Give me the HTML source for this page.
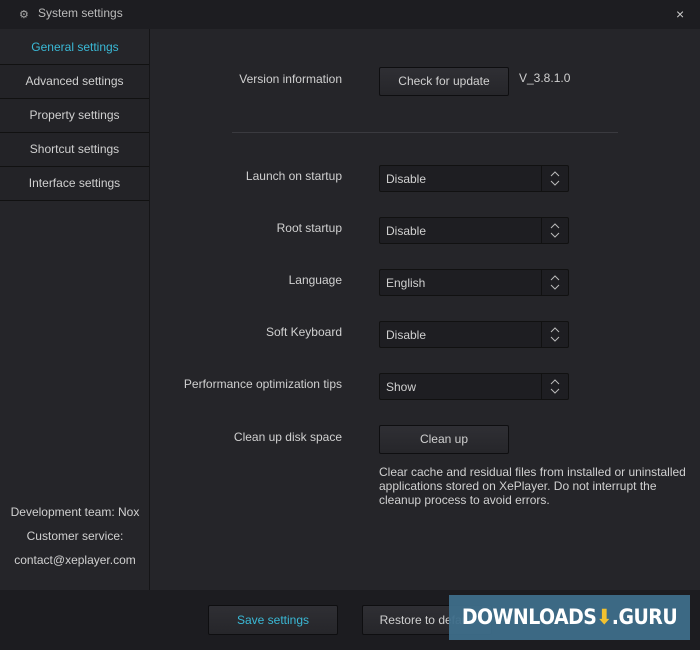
<!DOCTYPE html><html><head><style>
body{margin:0;width:700px;height:650px;background:#252529;font-family:"Liberation Sans",sans-serif;font-size:12px;color:#d0d0d0;position:relative;overflow:hidden}
.a{position:absolute}
.title{left:0;top:0;width:700px;height:29px;background:#1d1d21}
.side{left:0;top:29px;width:149px;height:561px;border-right:1px solid #151517;background:#252529}
.item{left:0;width:149px;height:33px;border-top:1px solid #111;line-height:33px;text-align:center;background:#232327}
.lbl{width:342px;text-align:right;left:0}
.sel{left:379px;width:190px;height:27px;border:1px solid #111;background:#1e1e22;line-height:26px;box-sizing:border-box;border-radius:2px}
.sel span{padding-left:6px}
.sel i{position:absolute;right:0;top:0;width:26px;height:25px;border-left:1px solid #111}
.btn{border:1px solid #0e0e10;background:linear-gradient(#2f2f34,#26262a);text-align:center;box-sizing:border-box;border-radius:2px}
</style></head><body>
<div class="a title"></div>
<div class="a" style="left:19px;top:8px;color:#aaa;font-size:11px">⚙</div>
<div class="a" style="left:38px;top:6px;color:#bbb">System settings</div>
<div class="a" style="left:676px;top:6px;color:#ccc;font-size:14px">×</div>
<div class="a side"></div>
<div class="a" style="left:0;top:40px;width:150px;text-align:center;color:#3ab9d6">General settings</div>
<div class="a item" style="top:64px">Advanced settings</div>
<div class="a item" style="top:98px">Property settings</div>
<div class="a item" style="top:132px">Shortcut settings</div>
<div class="a item" style="top:166px;border-bottom:1px solid #111">Interface settings</div>
<div class="a" style="left:0;top:500px;width:150px;text-align:center;line-height:24px">Development team: Nox<br>Customer service:<br>contact@xeplayer.com</div>
<div class="a lbl" style="top:72px">Version information</div>
<div class="a btn" style="left:379px;top:67px;width:130px;height:29px;line-height:27px">Check for update</div>
<div class="a" style="left:519px;top:71px">V_3.8.1.0</div>
<div class="a" style="left:232px;top:132px;width:386px;height:1px;background:#3a3a3f"></div>
<div class="a lbl" style="top:169px">Launch on startup</div>
<div class="a sel" style="top:165px"><span>Disable</span><i><svg width="26" height="25"><path d="M9 10l4-4 4 4M9 15l4 4 4-4" fill="none" stroke="#bbb"/></svg></i></div>
<div class="a lbl" style="top:221px">Root startup</div>
<div class="a sel" style="top:217px"><span>Disable</span><i><svg width="26" height="25"><path d="M9 10l4-4 4 4M9 15l4 4 4-4" fill="none" stroke="#bbb"/></svg></i></div>
<div class="a lbl" style="top:273px">Language</div>
<div class="a sel" style="top:269px"><span>English</span><i><svg width="26" height="25"><path d="M9 10l4-4 4 4M9 15l4 4 4-4" fill="none" stroke="#bbb"/></svg></i></div>
<div class="a lbl" style="top:325px">Soft Keyboard</div>
<div class="a sel" style="top:321px"><span>Disable</span><i><svg width="26" height="25"><path d="M9 10l4-4 4 4M9 15l4 4 4-4" fill="none" stroke="#bbb"/></svg></i></div>
<div class="a lbl" style="top:377px">Performance optimization tips</div>
<div class="a sel" style="top:373px"><span>Show</span><i><svg width="26" height="25"><path d="M9 10l4-4 4 4M9 15l4 4 4-4" fill="none" stroke="#bbb"/></svg></i></div>
<div class="a lbl" style="top:430px">Clean up disk space</div>
<div class="a btn" style="left:379px;top:425px;width:130px;height:29px;line-height:27px">Clean up</div>
<div class="a" style="left:379px;top:465px;width:320px;line-height:14px">Clear cache and residual files from installed or uninstalled applications stored on XePlayer. Do not interrupt the cleanup process to avoid errors.</div>
<div class="a" style="left:0;top:590px;width:700px;height:60px;background:#1c1c20"></div>
<div class="a btn" style="left:208px;top:605px;width:130px;height:30px;line-height:28px;color:#3ab9d6">Save settings</div>
<div class="a btn" style="left:362px;top:605px;width:130px;height:30px;line-height:28px">Restore to default</div>
<div class="a" style="left:449px;top:595px;width:241px;height:45px;background:rgba(62,110,138,0.95);color:#fff;font-family:'DejaVu Sans Condensed','Liberation Sans',sans-serif;font-weight:bold;font-size:21px;line-height:45px;text-align:center;letter-spacing:-0.5px">DOWNLOADS<span style="color:#f2c230">⬇</span>.GURU</div>
</body></html>
